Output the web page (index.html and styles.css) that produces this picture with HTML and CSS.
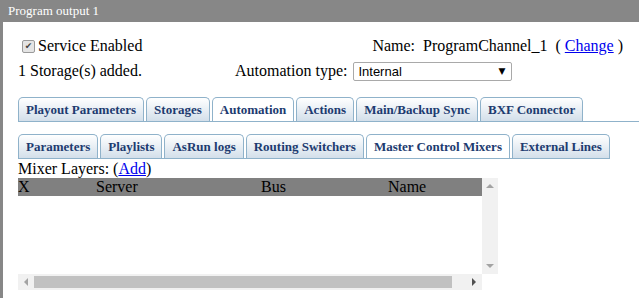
FILE: index.html
```
<!DOCTYPE html>
<html lang="en">
  <head>
    <meta charset="UTF-8" />
    <title>Program output 1</title>
    <link rel="stylesheet" href="styles.css">
  </head>
  <body>
    <div class="window">
      <div class="titlebar">Program output 1</div>
      <div class="content">
        <div class="row row1">
          <label class="enabled"><input type="checkbox" checked />Service Enabled</label>
          <div class="name">Name:&nbsp; ProgramChannel_1 &nbsp;( <a href="#">Change</a> )</div>
        </div>
        <div class="row row2">
          <div class="storage">1 Storage(s) added.</div>
          <div>Automation type:</div>
          <span class="select-wrap">
            <select class="auto-type">
              <option>Internal</option>
            </select>
          </span>
        </div>

        <!-- main tabs -->
        <ul class="tabs tabs-main">
          <li>Playout Parameters</li>
          <li>Storages</li>
          <li class="active">Automation</li>
          <li>Actions</li>
          <li>Main/Backup Sync</li>
          <li>BXF Connector</li>
        </ul>

        <!-- automation sub tabs -->
        <ul class="tabs tabs-sub">
          <li>Parameters</li>
          <li>Playlists</li>
          <li>AsRun logs</li>
          <li>Routing Switchers</li>
          <li class="active">Master Control Mixers</li>
          <li>External Lines</li>
        </ul>

        <div class="layers-title">Mixer Layers: (<a href="#">Add</a>)</div>
        <div class="scroll-box">
          <div class="viewport">
            <table class="layers">
              <thead>
                <tr>
                  <th class="col-x">X</th>
                  <th class="col-server">Server</th>
                  <th class="col-bus">Bus</th>
                  <th>Name</th>
                </tr>
              </thead>
            </table>
          </div>
          <div class="vbar">
            <span class="arrow up"></span>
            <span class="arrow down"></span>
          </div>
          <div class="hbar">
            <span class="hbtn"><span class="arrow left"></span></span>
            <span class="thumb"></span>
            <span class="hbtn"><span class="arrow right"></span></span>
          </div>
          <div class="corner"></div>
        </div>
      </div>
    </div>
  </body>
</html>
```

FILE: styles.css
```
body {
  margin: 0;
  font-family: "Liberation Serif", "Times New Roman", serif;
  font-size: 16px;
  color: #000;
  background: #fff;
}
a {
  color: #0000ee;
}
.window {
  border-left: 3px solid #878787;
  height: 298px;
  box-sizing: border-box;
}
.titlebar {
  height: 22px;
  line-height: 22px;
  background-color: #878787;
  color: #fff;
  font-size: 13px;
  padding-left: 5px;
}
.content {
  padding: 15px 0 0 15px;
}
.row {
  display: flex;
  align-items: center;
  height: 18px;
  line-height: 18px;
}
.row1 {
  justify-content: space-between;
  padding-right: 16px;
}
.row2 {
  margin-top: 7px;
}
.enabled {
  display: flex;
  align-items: center;
}
.enabled input {
  appearance: none;
  box-sizing: border-box;
  width: 13px;
  height: 13px;
  margin: 0 3px 0 4px;
  border: 1px solid #9a9a9a;
  border-radius: 2px;
  background: #e4e4e4;
  display: flex;
  align-items: center;
  justify-content: center;
}
.enabled input:checked::after {
  content: "\2714";
  font-family: "DejaVu Sans", sans-serif;
  font-size: 9px;
  line-height: 10px;
  color: #444;
}
.storage {
  width: 217px;
}
.select-wrap {
  position: relative;
  margin-left: 6px;
  height: 19px;
}
.select-wrap::after {
  content: "\25BC";
  position: absolute;
  right: 7px;
  top: 3px;
  font-family: "DejaVu Sans", sans-serif;
  font-size: 9px;
  line-height: 12px;
  color: #000;
  pointer-events: none;
}
.auto-type {
  appearance: none;
  width: 159px;
  height: 19px;
  font-family: "Liberation Sans", Arial, sans-serif;
  font-size: 13px;
  border: 1px solid #a9a9a9;
  border-radius: 2px;
  background: #fff;
  padding: 0 4px;
  color: #000;
}

/* tabs */
.tabs {
  list-style: none;
  margin: 0;
  padding: 0;
  display: flex;
  gap: 2px;
  border-bottom: 1px solid #8fb2ca;
}
.tabs-main {
  margin-top: 17px;
}
.tabs-sub {
  display: inline-flex;
  margin-top: 12px;
}
.tabs li {
  border: 1px solid #8fb2ca;
  border-bottom: none;
  border-radius: 5px 5px 0 0;
  padding: 4px 7px;
  line-height: 15px;
  font-size: 13px;
  font-weight: bold;
  color: #1d3b70;
  background: linear-gradient(#ffffff, #d3dfea);
}
.tabs li.active {
  background: #fff;
}

/* mixer layers */
.layers-title {
  line-height: 18px;
  margin-top: 1px;
}
.scroll-box {
  display: grid;
  grid-template-columns: 464px 16px;
  grid-template-rows: 96px 16px;
  width: 480px;
}
.viewport {
  overflow: hidden;
}
.layers {
  width: 480px;
  border-collapse: collapse;
}
.layers th {
  background-color: #808080;
  font-weight: normal;
  text-align: left;
  padding: 0;
  height: 18px;
  line-height: 18px;
}
.col-x {
  width: 78px;
}
.col-server {
  width: 165px;
}
.col-bus {
  width: 127px;
}
.vbar {
  background-color: #f1f1f1;
  display: flex;
  flex-direction: column;
  justify-content: space-between;
  align-items: center;
  padding: 6px 0;
}
.hbar {
  background-color: #f1f1f1;
  display: grid;
  grid-template-columns: 16px 418px 1fr 16px;
  align-items: center;
}
.hbar .hbtn:last-child {
  grid-column: 4;
}
.hbtn {
  display: flex;
  justify-content: center;
  align-items: center;
  height: 16px;
}
.thumb {
  height: 12px;
  background-color: #c1c1c1;
}
.corner {
  background: #fff;
}
.arrow {
  width: 0;
  height: 0;
  border: 4px solid transparent;
}
.arrow.up {
  border-top: none;
  border-bottom-color: #a3a3a3;
}
.arrow.down {
  border-bottom: none;
  border-top-color: #a3a3a3;
}
.arrow.left {
  border-left: none;
  border-right-color: #a3a3a3;
}
.arrow.right {
  border-right: none;
  border-left-color: #505050;
}
```
